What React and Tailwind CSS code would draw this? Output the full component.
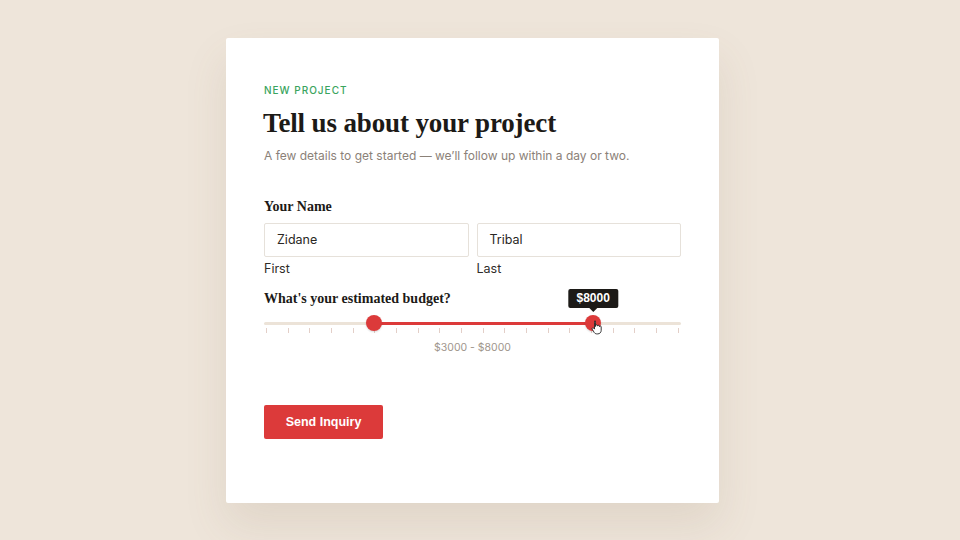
const budget = { min: 500, max: 10000, low: 3000, high: 8000 }
const ticks = Array.from({ length: 20 })

const pct = v => ((v - budget.min) / (budget.max - budget.min)) * 100

const serif = "font-['Liberation_Serif',serif]"

const HandCursor = () => (
  <svg width="12" height="15" viewBox="0 0 12 15">
    <path
      d="M3.5 1.2c.6 0 1 .4 1 1v4.3l.1-.9c.1-.5.5-.8 1-.8s.9.4.9.9v.4c.1-.5.5-.8 1-.8s.9.4.9.9v.5c.1-.4.5-.7.9-.7.5 0 .9.4.9.9v3.4c0 2-1.4 3.6-3.4 3.6H5.6c-1 0-1.8-.5-2.3-1.3L1.2 9.2c-.3-.5-.1-1 .3-1.3.4-.2.9-.1 1.2.2l.8 1V2.2c0-.6.4-1 1-1z"
      fill="#fff"
      stroke="#222"
      strokeWidth="0.9"
      strokeLinejoin="round"
    />
  </svg>
)

const Thumb = ({ at, children }) => (
  <div
    className="absolute top-0 w-[16px] h-[16px] -ml-[8px] rounded-full bg-[#dc3a3a] shadow-[0_1px_2px_rgba(0,0,0,0.15)]"
    style={{ left: `${at}%` }}
  >
    {children}
  </div>
)

export default function App() {
  const lowPct = pct(budget.low)
  const highPct = pct(budget.high)

  return (
    <div className="min-h-screen w-full bg-[#eee5da] flex justify-center pt-[38px] pr-[15px] font-['Inter',sans-serif]">
      <div className="w-[493px] h-[465px] bg-white rounded-[2px] shadow-[0_22px_44px_rgba(120,100,70,0.12)] px-[38px] pt-[45px] flex flex-col">
        <p className="text-[10px] leading-[14px] font-medium tracking-[0.1em] text-[#3aa45e]">NEW PROJECT</p>
        <h1 className={`${serif} mt-[10px] -ml-px text-[27px] leading-[32px] font-bold text-[#1c1a17] tracking-[-0.005em]`}>
          Tell us about your project
        </h1>
        <p className="mt-[8px] text-[12px] leading-[18px] text-[#8b8178]">
          A few details to get started — we’ll follow up within a day or two.
        </p>

        <p className={`${serif} mt-[33px] text-[14px] leading-[18px] font-bold text-[#1c1a17]`}>Your Name</p>
        <div className="grid grid-cols-2 gap-2 mt-[7px]">
          {[
            { value: 'Zidane', label: 'First' },
            { value: 'Tribal', label: 'Last' },
          ].map(f => (
            <div key={f.label} className="flex flex-col gap-[4px]">
              <div className="h-[34px] border border-[#e6e1da] rounded-[2px] px-3 flex items-center text-[12.5px] text-[#2a2724]">
                {f.value}
              </div>
              <p className="text-[12.5px] leading-[16px] text-[#2f2c29]">{f.label}</p>
            </div>
          ))}
        </div>

        <p className={`${serif} mt-[13px] text-[14px] leading-[18px] font-bold text-[#1c1a17]`}>
          What's your estimated budget?
        </p>

        {/* range slider */}
        <div className="relative h-[16px] mt-[7px]">
          <div className="absolute inset-x-0 top-[6.5px] h-[3px] bg-[#ece3d8] rounded-full" />
          <div
            className="absolute top-[6.5px] h-[3px] bg-[#dc3a3a]"
            style={{ left: `${lowPct}%`, width: `${highPct - lowPct}%` }}
          />
          <Thumb at={lowPct} />
          <Thumb at={highPct}>
            <div className="absolute bottom-[23px] left-1/2 -translate-x-1/2 bg-[#1c1a17] text-white text-[12px] font-bold font-['Liberation_Sans',sans-serif] px-[8px] h-[19px] leading-[19px] rounded-[2px] whitespace-nowrap">
              ${budget.high}
              <span className="absolute left-1/2 -translate-x-1/2 top-full border-x-[4px] border-x-transparent border-t-[4px] border-t-[#1c1a17]" />
            </div>
            <div className="absolute left-[6px] top-[5px]">
              <HandCursor />
            </div>
          </Thumb>
        </div>
        <div className="flex justify-between px-[2px] -mt-[3px]">
          {ticks.map((_, i) => (
            <span key={i} className="w-px h-[5px] bg-[#e3cfc8]" />
          ))}
        </div>
        <p className="mt-[7px] text-center text-[10.5px] leading-[16px] text-[#a0968d]">
          ${budget.low} - ${budget.high}
        </p>

        <button className="mt-[49px] self-start w-[119px] h-[34px] bg-[#dc3a3a] text-white text-[12.5px] font-bold font-['Liberation_Sans',sans-serif] rounded-[2px]">
          Send Inquiry
        </button>
      </div>
    </div>
  )
}
